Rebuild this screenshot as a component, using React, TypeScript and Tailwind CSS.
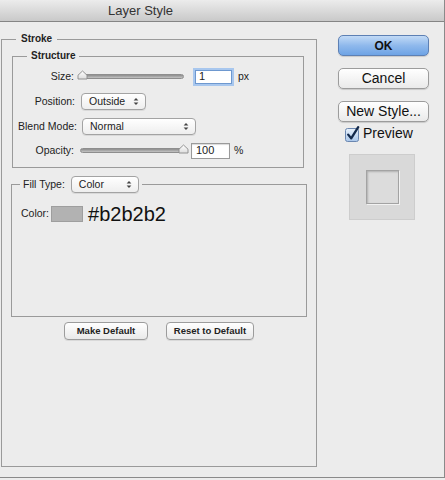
import React from "react";

// little up/down arrows used by the popup menus
const UpDown = () => (
  <svg width="6" height="9" viewBox="0 0 6 9">
    <path d="M0.6 3.6 L3 1 L5.4 3.6 Z M0.6 5.4 L3 8 L5.4 5.4 Z" fill="#444" />
  </svg>
);

// slider thumb, pointed top
const Thumb = () => (
  <svg width="11" height="10" viewBox="0 0 11 10">
    <defs>
      <linearGradient id="tg" x1="0" y1="0" x2="0" y2="1">
        <stop offset="0" stopColor="#ffffff" />
        <stop offset="1" stopColor="#dcdcdc" />
      </linearGradient>
    </defs>
    <path d="M1 9 V5.2 L5.5 1 L10 5.2 V9 Z" fill="url(#tg)" stroke="#8a8a8a" strokeWidth="0.9" strokeLinejoin="round" />
  </svg>
);

function Select({ label, width }: { label: string; width: string }) {
  return (
    <div
      className={`${width} h-[17px] flex items-center justify-between pl-[7px] pr-[6px] border border-[#a3a3a3] rounded-[4px] bg-gradient-to-b from-white to-[#eeeeee] shadow-[0_1px_0_rgba(0,0,0,0.08)] text-[10.5px] text-[#222]`}
    >
      <span>{label}</span>
      <UpDown />
    </div>
  );
}

function Slider({ width, thumb }: { width: string; thumb: "left" | "right" }) {
  return (
    <div className={`relative ${width} h-[17px]`}>
      <div className="absolute left-0 right-0 top-[6px] h-[5px] rounded-full border border-[#8e8e8e] bg-gradient-to-b from-[#8d8d8d] to-[#c4c4c4]" />
      <div className={`absolute top-[2px] ${thumb === "left" ? "left-[-1px]" : "right-[-1px]"}`}>
        <Thumb />
      </div>
    </div>
  );
}

function Button({ children, width }: { children: React.ReactNode; width: string }) {
  return (
    <div
      className={`${width} h-[18px] flex items-center justify-center border border-[#9c9c9c] rounded-[4px] bg-gradient-to-b from-white to-[#e9e9e9] shadow-[0_1px_0_rgba(0,0,0,0.08)] text-[9.5px] font-bold text-[#222]`}
    >
      {children}
    </div>
  );
}

function BigButton({ children, primary }: { children: React.ReactNode; primary?: boolean }) {
  return (
    <div
      className={`h-[21px] w-[91px] flex items-center justify-center rounded-[5px] border shadow-[0_1px_1px_rgba(0,0,0,0.15)] text-[#111] ${
        primary
          ? "border-[#5d80b4] bg-gradient-to-b from-[#c2daf6] via-[#8fb9ec] to-[#6ea3e5] text-[12px] font-bold"
          : "border-[#9c9c9c] bg-gradient-to-b from-white to-[#eaeaea] text-[14px]"
      }`}
    >
      {children}
    </div>
  );
}

export default function App() {
  return (
    <div className="w-[445px] h-[480px] bg-[#ececec] font-['Liberation_Sans',Arial,sans-serif] text-[#222]">
      <div className="w-[445px] h-[478px] border-r border-b border-[#8a8a8a] flex flex-col">
        {/* title bar */}
        <div className="h-[22px] shrink-0 border-b border-[#858585] bg-gradient-to-b from-[#ececec] to-[#c9c9c9] flex items-center pl-[108px] text-[13px] text-[#333]">
          Layer Style
        </div>

        <div className="flex">
          {/* Stroke group */}
          <fieldset className="ml-[1px] mt-[11px] w-[316px] h-[434px] border border-[#9a9a9a] min-w-0">
            <legend className="ml-[14px] px-[5px] text-[10px] leading-[12px] font-bold">Stroke</legend>

            {/* Structure group */}
            <fieldset className="ml-[10px] mt-[5px] w-[292px] h-[118px] border border-[#9a9a9a] min-w-0">
              <legend className="ml-[14px] px-[4px] text-[10px] leading-[12px] font-bold">Structure</legend>

              <div className="mt-[6px] h-[17px] flex items-center text-[10.5px]">
                <span className="w-[61px] text-right">Size:</span>
                <div className="ml-[4px]">
                  <Slider width="w-[106px]" thumb="left" />
                </div>
                <div className="ml-[11px] w-[37px] h-[14px] bg-white border border-[#6e98cf] shadow-[0_0_0_2px_#a8c7ee] flex items-center pl-[3px] text-[11px]">
                  1
                </div>
                <span className="ml-[6px] text-[10.5px]">px</span>
              </div>

              <div className="mt-[8px] h-[17px] flex items-center text-[10.5px]">
                <span className="w-[62px] text-right">Position:</span>
                <div className="ml-[6px]">
                  <Select label="Outside" width="w-[65px]" />
                </div>
              </div>

              <div className="mt-[8px] h-[17px] flex items-center text-[10.5px]">
                <span className="w-[64px] text-right">Blend Mode:</span>
                <div className="ml-[5px]">
                  <Select label="Normal" width="w-[114px]" />
                </div>
              </div>

              <div className="mt-[7px] h-[17px] flex items-center text-[10.5px]">
                <span className="w-[61px] text-right">Opacity:</span>
                <div className="ml-[6px]">
                  <Slider width="w-[108px]" thumb="right" />
                </div>
                <div className="ml-[3px] w-[39px] h-[16px] bg-white border border-[#9a9a9a] shadow-[inset_0_1px_1px_rgba(0,0,0,0.15)] flex items-center pl-[4px] text-[11px]">
                  100
                </div>
                <span className="ml-[4px] text-[10.5px]">%</span>
              </div>
            </fieldset>

            {/* Fill type group */}
            <fieldset className="ml-[9px] mt-[8px] w-[296px] h-[141px] border border-[#9a9a9a] min-w-0">
              <legend className="ml-[8px] px-[3px]">
                <div className="flex items-center h-[17px] text-[10.5px]">
                  <span>Fill Type:</span>
                  <div className="ml-[6px]">
                    <Select label="Color" width="w-[68px]" />
                  </div>
                </div>
              </legend>
              <div className="mt-[10px] pl-[9px] h-[22px] flex items-center">
                <span className="text-[10.5px]">Color:</span>
                <div className="ml-[2px] w-[32px] h-[16px] bg-[#b2b2b2] border border-[#9e9e9e]" />
                <span className="ml-[5px] text-[20px] leading-[22px] text-[#111]">#b2b2b2</span>
              </div>
            </fieldset>

            <div className="mt-[5px] flex justify-center gap-[18px]">
              <Button width="w-[84px]">Make Default</Button>
              <Button width="w-[88px]">Reset to Default</Button>
            </div>
          </fieldset>

          {/* right column */}
          <div className="ml-[21px] flex flex-col">
            <div className="mt-[13px]">
              <BigButton primary>OK</BigButton>
            </div>
            <div className="mt-[12px]">
              <BigButton>Cancel</BigButton>
            </div>
            <div className="mt-[12px]">
              <BigButton>New Style...</BigButton>
            </div>
            <div className="mt-[3px] h-[17px] flex items-center pl-[7px]">
              <svg width="16" height="16" viewBox="0 0 16 16">
                <defs>
                  <linearGradient id="cb" x1="0" y1="0" x2="0" y2="1">
                    <stop offset="0" stopColor="#e8f1fb" />
                    <stop offset="1" stopColor="#a9c6ea" />
                  </linearGradient>
                </defs>
                <rect x="0.5" y="2.5" width="13" height="13" rx="2" fill="url(#cb)" stroke="#6b87b0" />
                <path d="M3.2 8.6 L6.2 12.4 L13.2 1.2" fill="none" stroke="#13294b" strokeWidth="2.3" strokeLinecap="round" strokeLinejoin="round" />
              </svg>
              <span className="ml-[2px] text-[14px] text-[#111]">Preview</span>
            </div>
            <div className="mt-[12px] ml-[11px] w-[66px] h-[66px] bg-[#d9d9d9] border border-[#cdcdcd] flex items-center justify-center">
              <div className="w-[33px] h-[34px] border border-[#a3a3a3] bg-[#dcdcdc] shadow-[inset_1px_1px_2px_rgba(0,0,0,0.2),1px_1px_0_#f2f2f2]" />
            </div>
          </div>
        </div>
      </div>
    </div>
  );
}
